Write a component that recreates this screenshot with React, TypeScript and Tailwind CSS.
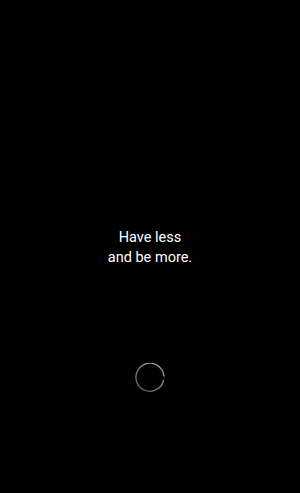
import React from "react";

export default function App() {
  return (
    <div className="w-[300px] h-[493px] bg-black flex flex-col items-center" style={{ fontFamily: "Roboto, 'Liberation Sans', sans-serif" }}>
      <div className="h-[228px] shrink-0" />
      <p className="text-white text-[14.5px] leading-[20px] text-center">
        Have less
        <br />
        and be more.
      </p>
      <div className="h-[95px] shrink-0" />
      <svg width="30" height="30" viewBox="0 0 30 30">
        <defs>
          <linearGradient id="g" x1="0" y1="1" x2="1" y2="0">
            <stop offset="0" stopColor="#5a5a5a" />
            <stop offset="1" stopColor="#a0a0a0" />
          </linearGradient>
        </defs>
        <path
          d="M28.6 17.4 A14 14 0 1 1 28.9 13"
          fill="none"
          stroke="url(#g)"
          strokeWidth="1.4"
          strokeLinecap="round"
        />
      </svg>
    </div>
  );
}
